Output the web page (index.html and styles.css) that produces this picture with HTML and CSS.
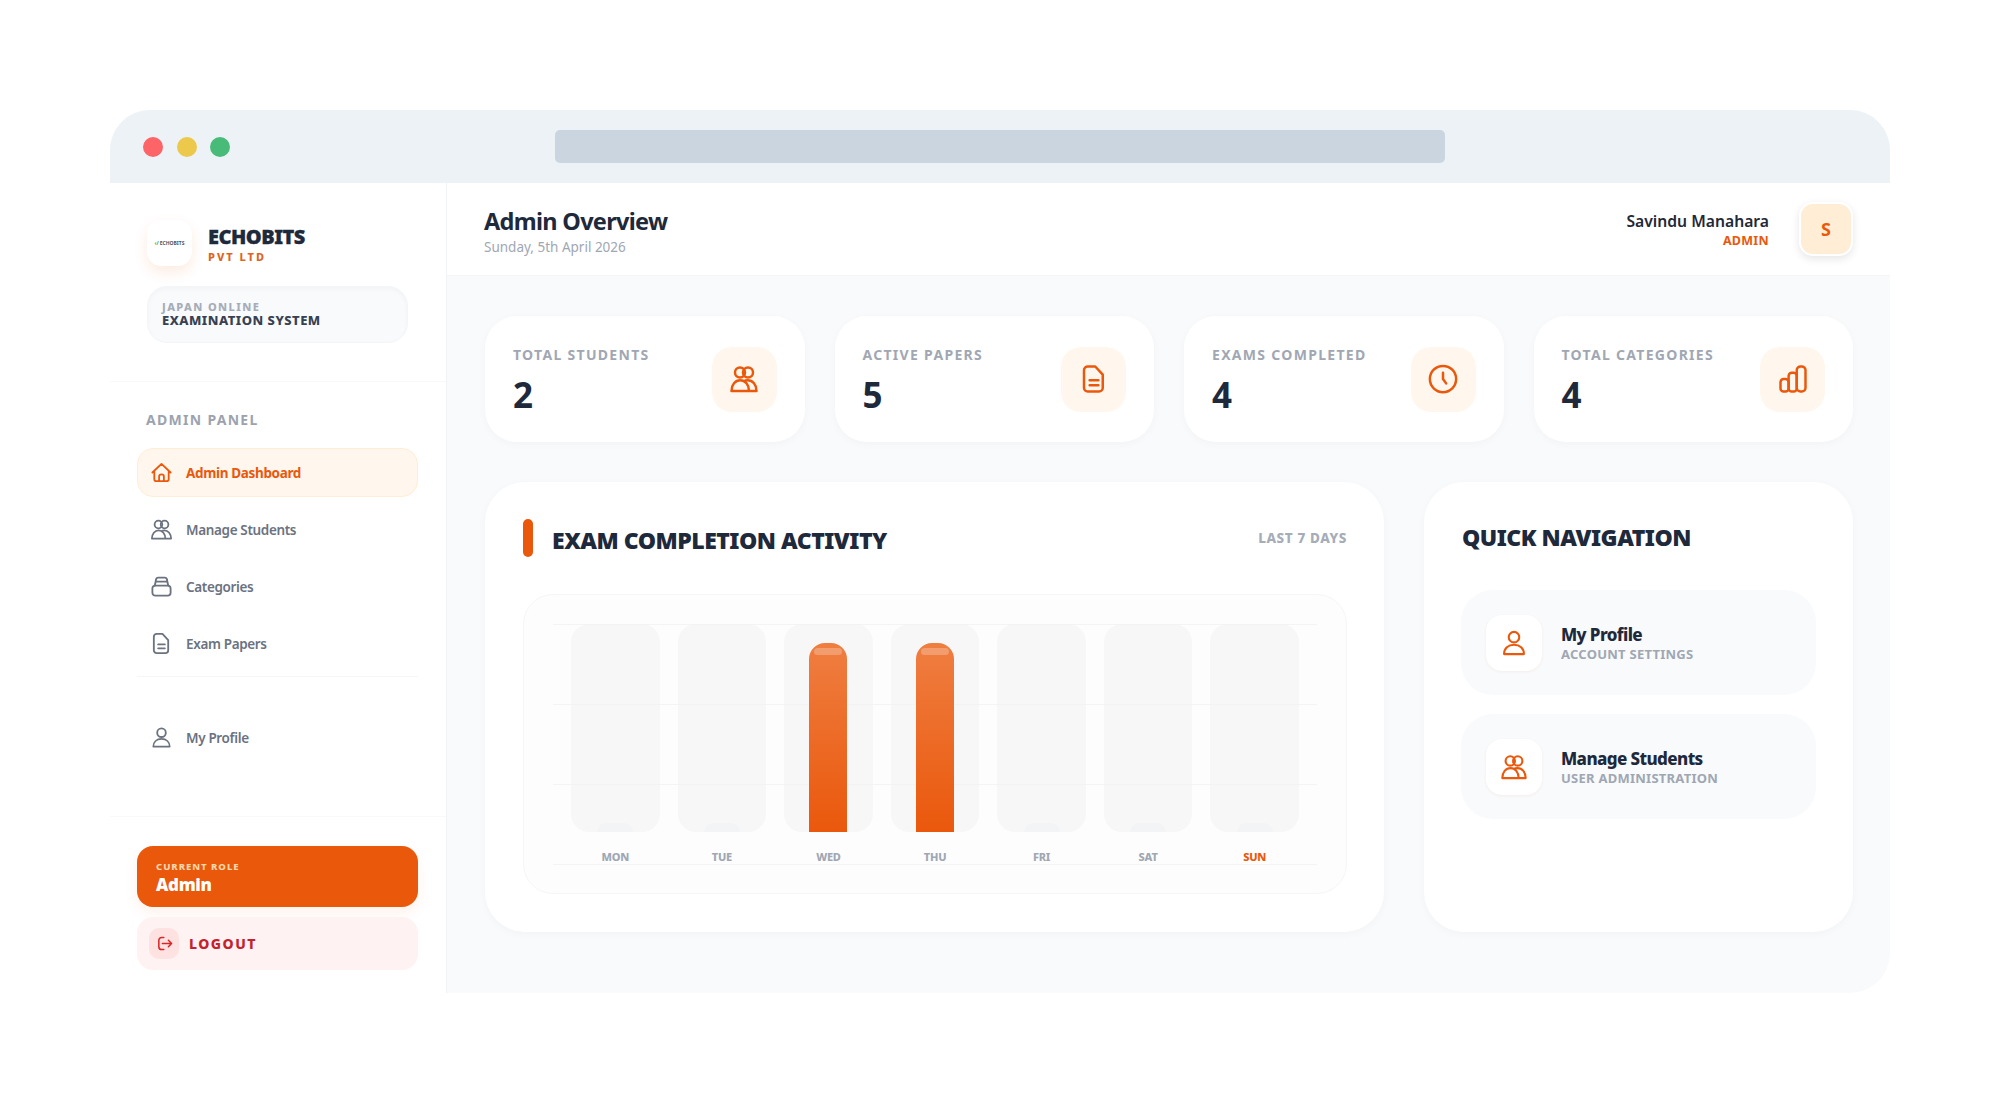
FILE: index.html
```html
<!DOCTYPE html>
<html lang="en">
<head>
    <meta charset="UTF-8">
    <meta name="viewport" content="width=device-width, initial-scale=1.0">
    <title>Echobits Admin Overview</title>
    <link rel="stylesheet" href="styles.css">
</head>
<body>
    <svg class="sprite" aria-hidden="true">
        <symbol id="i-home" viewBox="0 0 24 24"><path d="M4.5 10v9a2 2 0 0 0 2 2h11a2 2 0 0 0 2-2v-9M2.5 12 12 3l9.500 9M9.500 21v-4.500a2.500 2.500 0 0 1 5 0V21"/></symbol>
        <symbol id="i-users" viewBox="0 0 24 24"><circle cx="8.800" cy="6.800" r="4"/><circle cx="15.200" cy="6.800" r="4"/><path d="M2 21.500c0-5 3-8.500 7-8.500s7 3.500 7 8.500zM13 13.200c.8-.1 1.500-.2 2-.2 4 0 7 3.500 7 8.500h-6"/></symbol>
        <symbol id="i-box" viewBox="0 0 24 24"><rect x="2.500" y="11" width="19" height="10.500" rx="3"/><path d="M5 11l1.300-6a2.500 2.500 0 0 1 2.400-2.300h6.600A2.500 2.500 0 0 1 17.700 5L19 11M6 7h12"/></symbol>
        <symbol id="i-doc" viewBox="0 0 24 24"><path d="M7 2h6l6 6.500V19a3 3 0 0 1-3 3H7a3 3 0 0 1-3-3V5a3 3 0 0 1 3-3zM8.500 13h7M8.500 17h7"/></symbol>
        <symbol id="i-user" viewBox="0 0 24 24"><circle cx="12" cy="7" r="4.500"/><path d="M3.500 21.500c0-4.800 3.500-8 8.500-8s8.500 3.200 8.500 8z"/></symbol>
        <symbol id="i-clock" viewBox="0 0 24 24"><circle cx="12" cy="12" r="10.500"/><path d="M12 7v5l2.500 3.500"/></symbol>
        <symbol id="i-bars" viewBox="0 0 24 24"><rect x="2" y="12" width="6.500" height="10" rx="2.500"/><rect x="8.500" y="7" width="6.500" height="15" rx="2.500"/><rect x="15" y="2" width="7" height="20" rx="3"/></symbol>
        <symbol id="i-logout" viewBox="0 0 24 24"><path d="M11 3.500H8a4 4 0 0 0-4 4v9a4 4 0 0 0 4 4h3M9 12h13M17.500 7.500 22 12l-4.500 4.500"/></symbol>
    </svg>

    <div class="window">
        <div class="titlebar">
            <span class="dot dot-red"></span>
            <span class="dot dot-yellow"></span>
            <span class="dot dot-green"></span>
            <div class="urlbar"></div>
        </div>

        <div class="app">
            <aside class="sidebar">
                <div class="brand-block">
                    <div class="brand">
                        <div class="brand-logo"><b>&lsaquo;/</b><span>ECHOBITS</span></div>
                        <div>
                            <div class="brand-name">ECHOBITS</div>
                            <div class="brand-sub">PVT LTD</div>
                        </div>
                    </div>
                    <div class="system-box">
                        <div class="system-top">JAPAN ONLINE</div>
                        <div class="system-name">EXAMINATION SYSTEM</div>
                    </div>
                </div>

                <nav class="side-nav">
                    <div class="side-label">ADMIN PANEL</div>
                    <a class="side-link active"><svg class="icon"><use href="#i-home"/></svg>Admin Dashboard</a>
                    <a class="side-link"><svg class="icon"><use href="#i-users"/></svg>Manage Students</a>
                    <a class="side-link"><svg class="icon"><use href="#i-box"/></svg>Categories</a>
                    <a class="side-link"><svg class="icon"><use href="#i-doc"/></svg>Exam Papers</a>
                    <div class="side-divider"></div>
                    <a class="side-link"><svg class="icon"><use href="#i-user"/></svg>My Profile</a>
                </nav>

                <div class="side-bottom">
                    <div class="role-card">
                        <div class="role-label">CURRENT ROLE</div>
                        <div class="role-name">Admin</div>
                    </div>
                    <a class="logout">
                        <span class="logout-icon"><svg class="icon-sm"><use href="#i-logout"/></svg></span>
                        LOGOUT
                    </a>
                </div>
            </aside>

            <main class="main">
                <header class="topbar">
                    <div class="page-title">
                        <h1>Admin Overview</h1>
                        <div class="date">Sunday, 5th April 2026</div>
                    </div>
                    <div class="user">
                        <div class="user-text">
                            <div class="user-name">Savindu Manahara</div>
                            <div class="user-role">ADMIN</div>
                        </div>
                        <div class="avatar">S</div>
                    </div>
                </header>

                <div class="content">
                    <section class="stats">
                        <div class="stat">
                            <div>
                                <div class="stat-label">TOTAL STUDENTS</div>
                                <div class="stat-value">2</div>
                            </div>
                            <div class="stat-icon"><svg class="icon-lg"><use href="#i-users"/></svg></div>
                        </div>
                        <div class="stat">
                            <div>
                                <div class="stat-label">ACTIVE PAPERS</div>
                                <div class="stat-value">5</div>
                            </div>
                            <div class="stat-icon"><svg class="icon-lg"><use href="#i-doc"/></svg></div>
                        </div>
                        <div class="stat">
                            <div>
                                <div class="stat-label">EXAMS COMPLETED</div>
                                <div class="stat-value">4</div>
                            </div>
                            <div class="stat-icon"><svg class="icon-lg"><use href="#i-clock"/></svg></div>
                        </div>
                        <div class="stat">
                            <div>
                                <div class="stat-label">TOTAL CATEGORIES</div>
                                <div class="stat-value">4</div>
                            </div>
                            <div class="stat-icon"><svg class="icon-lg"><use href="#i-bars"/></svg></div>
                        </div>
                    </section>

                    <section class="panels">
                        <div class="panel">
                            <div class="panel-head">
                                <span class="accent"></span>
                                <h2>EXAM COMPLETION ACTIVITY</h2>
                                <span class="range">LAST 7 DAYS</span>
                            </div>
                            <div class="chart">
                                <div class="plot">
                                    <div class="gridlines"><i></i><i></i><i></i><i></i></div>
                                    <div class="days">
                                        <div class="day"><div class="track"><div class="stub"></div></div><span>MON</span></div>
                                        <div class="day"><div class="track"><div class="stub"></div></div><span>TUE</span></div>
                                        <div class="day"><div class="track"><div class="bar"></div></div><span>WED</span></div>
                                        <div class="day"><div class="track"><div class="bar"></div></div><span>THU</span></div>
                                        <div class="day"><div class="track"><div class="stub"></div></div><span>FRI</span></div>
                                        <div class="day"><div class="track"><div class="stub"></div></div><span>SAT</span></div>
                                        <div class="day today"><div class="track"><div class="stub"></div></div><span>SUN</span></div>
                                    </div>
                                </div>
                            </div>
                        </div>

                        <div class="panel">
                            <h2 class="quick-title">QUICK NAVIGATION</h2>
                            <a class="quick-item">
                                <span class="quick-icon"><svg class="icon-md"><use href="#i-user"/></svg></span>
                                <span class="quick-text">
                                    <span class="quick-name">My Profile</span>
                                    <span class="quick-sub">ACCOUNT SETTINGS</span>
                                </span>
                            </a>
                            <a class="quick-item">
                                <span class="quick-icon"><svg class="icon-md"><use href="#i-users"/></svg></span>
                                <span class="quick-text">
                                    <span class="quick-name">Manage Students</span>
                                    <span class="quick-sub">USER ADMINISTRATION</span>
                                </span>
                            </a>
                        </div>
                    </section>
                </div>
            </main>
        </div>
    </div>
</body>
</html>
```

FILE: styles.css
```css
* { box-sizing: border-box; }

body {
    margin: 0;
    padding: 110px;
    background-color: #fff;
    font-family: "Noto Sans", "Open Sans", sans-serif;
    color: #1e293b;
}

h1, h2 { margin: 0; }

.sprite { display: none; }

svg {
    fill: none;
    stroke: currentColor;
    stroke-linecap: round;
    stroke-linejoin: round;
    flex-shrink: 0;
}
.icon { width: 23px; height: 23px; stroke-width: 1.9; }
.icon-sm { width: 17px; height: 17px; stroke-width: 2.2; }
.icon-md { width: 28px; height: 28px; stroke-width: 1.8; }
.icon-lg { width: 30px; height: 30px; stroke-width: 2; }

.window {
    height: 883px;
    border-radius: 40px;
    overflow: hidden;
    background-color: #f8fafc;
    display: flex;
    flex-direction: column;
}

/* browser chrome */
.titlebar {
    height: 73px;
    flex-shrink: 0;
    padding-left: 33px;
    background-color: #edf2f7;
    display: flex;
    align-items: center;
    gap: 13.500px;
}
.dot { width: 20px; height: 20px; border-radius: 50%; }
.dot-red { background-color: #fc6468; }
.dot-yellow { background-color: #ecc94b; }
.dot-green { background-color: #48bb78; }
.urlbar {
    width: 890px;
    height: 33px;
    margin-left: 311px;
    border-radius: 5px;
    background-color: #cbd5e0;
}

.app { flex: 1; display: flex; min-height: 0; }

/* sidebar */
.sidebar {
    width: 337px;
    flex-shrink: 0;
    background-color: #fff;
    border-right: 1px solid #f1f4f7;
    display: flex;
    flex-direction: column;
}
.brand-block {
    height: 199px;
    padding: 37px 37px 0 37px;
    border-bottom: 1px solid #f8f9fb;
}
.brand { display: flex; gap: 16px; }
.brand-logo {
    width: 45px;
    height: 46px;
    border-radius: 14px;
    background-color: #fff;
    box-shadow: 0 6px 14px rgba(234, 88, 12, 0.12);
    display: flex;
    align-items: center;
    justify-content: center;
    gap: 1px;
    font-size: 5px;
    font-weight: 700;
    color: #4b5563;
}
.brand-logo b { color: #4caf50; }
.brand-name {
    margin-top: 5px;
    font-size: 20px;
    line-height: 24px;
    font-weight: 900;
    letter-spacing: -0.5px;
    -webkit-text-stroke: 0.3px #1e293b;
}
.brand-sub {
    margin-top: 1px;
    font-size: 11px;
    line-height: 13px;
    font-weight: 800;
    letter-spacing: 2px;
    color: #dd6522;
}
.system-box {
    margin-top: 20px;
    width: 261px;
    height: 57px;
    padding: 14px 14px 0;
    border: 1px solid #f3f5f8;
    border-radius: 20px;
    background-color: #f8fafc;
    box-shadow: inset 0 2px 4px rgba(0, 0, 0, 0.03);
}
.system-top {
    font-size: 11px;
    line-height: 12px;
    font-weight: 800;
    letter-spacing: 1.400px;
    color: #a6acb8;
}
.system-name {
    font-size: 13px;
    line-height: 15px;
    font-weight: 800;
    letter-spacing: 0.500px;
    color: #374151;
}

.side-nav { padding: 0 28px 0 27px; }
.side-label {
    margin: 28px 0 18px 9px;
    font-size: 14px;
    line-height: 20px;
    font-weight: 700;
    letter-spacing: 1.300px;
    color: #9ca3af;
}
.side-link {
    height: 49px;
    margin-bottom: 8px;
    padding-left: 12px;
    border: 1px solid transparent;
    border-radius: 16px;
    display: flex;
    align-items: center;
    gap: 13px;
    font-size: 13.500px;
    font-weight: 600;
    letter-spacing: -0.35px;
    color: #6b7280;
}
.side-link.active {
    background-color: #fff7ed;
    border-color: #ffedd5;
    font-weight: 700;
    color: #ea580c;
}
.side-divider {
    height: 1px;
    margin: 0 0 36px;
    background-color: #f5f6f8;
}

.side-bottom {
    margin-top: auto;
    padding: 29px 28px 23px 27px;
    border-top: 1px solid #f8f9fb;
    display: flex;
    flex-direction: column;
    gap: 10px;
}
.role-card {
    height: 61px;
    padding: 14px 19px;
    border-radius: 16px;
    background-color: #ea580c;
    box-shadow: 0 6px 14px rgba(234, 88, 12, 0.08);
}
.role-label {
    font-size: 9.500px;
    line-height: 14px;
    font-weight: 800;
    letter-spacing: 1px;
    color: #fed7aa;
}
.role-name {
    font-size: 17px;
    line-height: 22px;
    font-weight: 900;
    letter-spacing: -0.3px;
    color: #fff;
}
.logout {
    height: 53px;
    padding-left: 12px;
    border-radius: 16px;
    background-color: #fef2f2;
    display: flex;
    align-items: center;
    gap: 10px;
    font-size: 14px;
    font-weight: 800;
    letter-spacing: 1.500px;
    color: #c5222b;
}
.logout-icon {
    width: 30px;
    height: 31px;
    border-radius: 10px;
    background-color: #fee2e2;
    color: #dc2626;
    display: flex;
    align-items: center;
    justify-content: center;
}

/* main area */
.main { flex: 1; min-width: 0; display: flex; flex-direction: column; }

.topbar {
    height: 93px;
    flex-shrink: 0;
    padding: 0 37px;
    background-color: #fff;
    border-bottom: 1px solid #f3f5f8;
    display: flex;
    align-items: center;
    justify-content: space-between;
}
.page-title { margin-top: 3px; }
.topbar h1 {
    font-size: 23.500px;
    line-height: 30px;
    font-weight: 700;
    letter-spacing: -0.7px;
}
.date {
    margin-top: 2px;
    font-size: 13.500px;
    line-height: 18px;
    color: #a0a7b3;
}
.user { display: flex; align-items: center; gap: 30px; }
.user-text { text-align: right; margin-top: 1px; }
.user-name {
    font-size: 15.700px;
    line-height: 21px;
    font-weight: 600;
    color: #1f2937;
}
.user-role {
    margin-top: 1px;
    font-size: 12.500px;
    line-height: 15px;
    font-weight: 700;
    letter-spacing: 0.3px;
    color: #ea580c;
}
.avatar {
    width: 54px;
    height: 54px;
    margin-top: -1px;
    border: 2px solid #fff;
    border-radius: 14px;
    background-color: #ffedd5;
    box-shadow: 0 3px 8px rgba(0, 0, 0, 0.1);
    display: flex;
    align-items: center;
    justify-content: center;
    font-size: 18px;
    font-weight: 700;
    color: #ea580c;
}

.content { padding: 40px 37px 0 38px; }

.stats {
    display: grid;
    grid-template-columns: repeat(4, 1fr);
    gap: 30px;
}
.stat {
    height: 126px;
    padding: 0 28px;
    border-radius: 32px;
    background-color: #fff;
    box-shadow: 0 2px 8px rgba(15, 23, 42, 0.03);
    display: flex;
    align-items: center;
    justify-content: space-between;
}
.stat-label {
    font-size: 14px;
    line-height: 19px;
    font-weight: 700;
    letter-spacing: 1.300px;
    color: #a0a7b3;
}
.stat-value {
    margin-top: 12px;
    font-size: 35px;
    line-height: 38px;
    font-weight: 700;
    color: #1e293b;
}
.stat-icon {
    width: 65px;
    height: 65px;
    border-radius: 20px;
    background-color: #fff7ed;
    color: #ea580c;
    display: flex;
    align-items: center;
    justify-content: center;
}

.panels {
    margin-top: 40px;
    display: grid;
    grid-template-columns: 1fr 429px;
    gap: 40px;
}
.panel {
    height: 450px;
    padding: 37px 37px 38px 38px;
    border-radius: 40px;
    background-color: #fff;
    box-shadow: 0 2px 8px rgba(15, 23, 42, 0.03);
}
.panel-head {
    height: 38px;
    display: flex;
    align-items: center;
}
.accent {
    width: 10px;
    height: 38px;
    margin-right: 19px;
    border-radius: 5px;
    background-color: #ea580c;
}
h2 {
    font-size: 23px;
    line-height: 30px;
    font-weight: 900;
    letter-spacing: -0.5px;
    color: #1e293b;
}
.panel-head h2 { margin-top: 3px; }
.range {
    margin-left: auto;
    font-size: 13.500px;
    font-weight: 800;
    letter-spacing: 0.6px;
    color: #a6acb8;
}

.chart {
    height: 300px;
    margin-top: 37px;
    padding: 29px 29px 0;
    border: 1px solid #f5f6f8;
    border-radius: 30px;
    background-color: #fdfdfe;
}
.plot { position: relative; height: 241px; padding: 0 18px; }
.gridlines {
    position: absolute;
    inset: 0;
    display: flex;
    flex-direction: column;
    justify-content: space-between;
}
.gridlines i { display: block; height: 1px; background-color: #f3f4f6; }
.days {
    position: relative;
    display: grid;
    grid-template-columns: repeat(7, 1fr);
    gap: 18px;
}
.day { text-align: center; }
.day span {
    display: block;
    margin-top: 18px;
    font-size: 11px;
    line-height: 14px;
    font-weight: 800;
    letter-spacing: -0.2px;
    color: #a0a7b3;
}
.day.today span { color: #ea580c; }
.track {
    height: 208px;
    border-radius: 18px;
    background-color: rgba(243, 243, 243, 0.55);
    display: flex;
    align-items: flex-end;
    justify-content: center;
    overflow: hidden;
}
.stub {
    width: 36px;
    height: 9px;
    border-radius: 10px 10px 0 0;
    background-color: #f2f4f6;
}
.bar {
    position: relative;
    width: 38px;
    height: 189px;
    border-radius: 16px 16px 0 0;
    background: linear-gradient(to bottom, #ef7e41, #ea580c);
}
.bar::after {
    content: "";
    position: absolute;
    top: 5px;
    left: 5px;
    right: 5px;
    height: 7px;
    border-radius: 4px;
    background-color: rgba(255, 255, 255, 0.25);
}

.quick-title { margin-top: 3px; margin-bottom: 38px; }
.quick-item {
    height: 105px;
    margin-bottom: 19px;
    padding-left: 25px;
    border-radius: 32px;
    background-color: #f8fafc;
    display: flex;
    align-items: center;
    gap: 19px;
    width: 355px;
    margin-left: -1px;
}
.quick-icon {
    width: 56px;
    height: 56px;
    border-radius: 16px;
    background-color: #fff;
    box-shadow: 0 1px 3px rgba(234, 88, 12, 0.08);
    color: #ea580c;
    display: flex;
    align-items: center;
    justify-content: center;
}
.quick-text { margin-top: 1px; }
.quick-name {
    display: block;
    font-size: 17px;
    line-height: 21px;
    font-weight: 800;
    letter-spacing: -0.6px;
    color: #1e293b;
}
.quick-sub {
    display: block;
    margin-top: 1px;
    font-size: 13px;
    line-height: 17px;
    font-weight: 700;
    letter-spacing: 0.25px;
    color: #a0a7b3;
}
```
